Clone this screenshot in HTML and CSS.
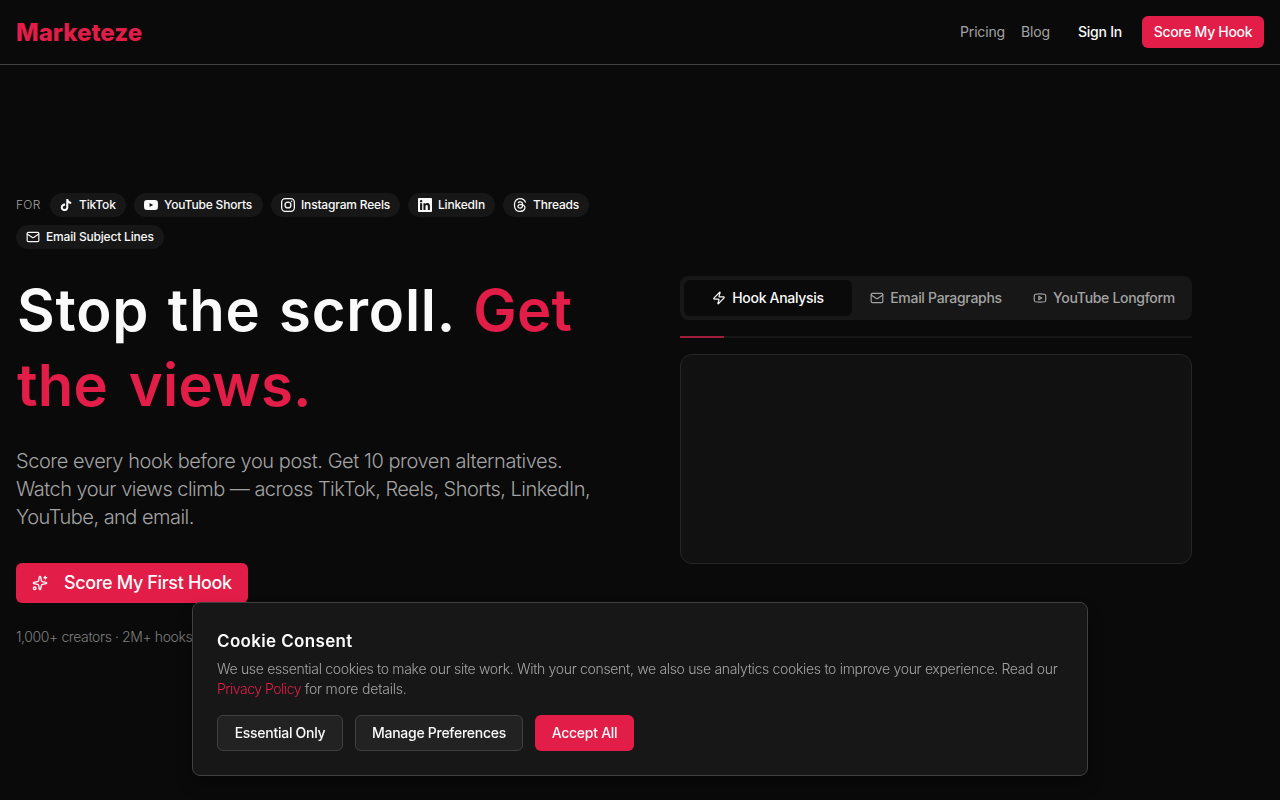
FILE: index.html
```
<!DOCTYPE html>
<html lang="en">
<head>
   <meta charset="UTF-8" />
   <meta name="viewport" content="width=device-width, initial-scale=1.0"/>
   <title>Marketeze</title>
   <link rel="stylesheet" href="styles.css">
</head>
<body>

   <header class="navbar">
      <a class="logo" href="#">Marketeze</a>
      <nav class="nav-links">
         <a class="nav-link pricing" href="#">Pricing</a>
         <a class="nav-link blog" href="#">Blog</a>
         <a class="sign-in" href="#">Sign In</a>
         <a class="btn btn-nav" href="#">Score My Hook</a>
      </nav>
   </header>

   <main class="hero">
      <section class="hero-text">
         <div class="platforms">
            <span class="for">FOR</span>
            <span class="badge tiktok">
               <svg class="icon" viewBox="-2 -2 28 28" fill="currentColor"><path d="M12.525.02c1.31-.02 2.61-.01 3.91-.02.08 1.53.63 3.09 1.75 4.17 1.12 1.11 2.7 1.62 4.24 1.79v4.03c-1.44-.05-2.89-.35-4.2-.97-.57-.26-1.1-.59-1.62-.93-.01 2.92.01 5.84-.02 8.75-.08 1.4-.54 2.79-1.35 3.94-1.31 1.92-3.58 3.17-5.91 3.21-1.43.08-2.86-.31-4.08-1.03-2.02-1.19-3.44-3.37-3.65-5.71-.02-.5-.03-1-.01-1.49.18-1.9 1.12-3.72 2.58-4.96 1.66-1.44 3.98-2.13 6.15-1.72.02 1.48-.04 2.96-.04 4.44-.99-.32-2.15-.23-3.02.37-.63.41-1.11 1.04-1.36 1.75-.21.51-.15 1.07-.14 1.61.24 1.64 1.82 3.02 3.5 2.87 1.12-.01 2.19-.66 2.77-1.61.19-.33.4-.67.41-1.06.1-1.79.06-3.57.07-5.36.01-4.03-.01-8.05.02-12.07z"/></svg>
               <span>TikTok</span>
            </span>
            <span class="badge shorts">
               <svg class="icon" viewBox="0 0 24 24" fill="currentColor"><path d="M23.498 6.186a3.016 3.016 0 0 0-2.122-2.136C19.505 3.545 12 3.545 12 3.545s-7.505 0-9.377.505A3.017 3.017 0 0 0 .502 6.186C0 8.07 0 12 0 12s0 3.93.502 5.814a3.016 3.016 0 0 0 2.122 2.136c1.871.505 9.376.505 9.376.505s7.505 0 9.377-.505a3.015 3.015 0 0 0 2.122-2.136C24 15.93 24 12 24 12s0-3.93-.502-5.814zM9.545 15.568V8.432L15.818 12l-6.273 3.568z"/></svg>
               <span>YouTube Shorts</span>
            </span>
            <span class="badge reels">
               <svg class="icon" viewBox="0 0 24 24" fill="none" stroke="currentColor" stroke-width="2.2"><rect x="1.1" y="1.1" width="21.8" height="21.8" rx="6"/><circle cx="12" cy="12" r="5.1"/><circle cx="18.4" cy="5.6" r="1.4" fill="currentColor" stroke="none"/></svg>
               <span>Instagram Reels</span>
            </span>
            <span class="badge linkedin">
               <svg class="icon" viewBox="0 0 24 24" fill="currentColor"><path d="M20.447 20.452h-3.554v-5.569c0-1.328-.027-3.037-1.852-3.037-1.853 0-2.136 1.445-2.136 2.939v5.667H9.351V9h3.414v1.561h.046c.477-.9 1.637-1.85 3.37-1.85 3.601 0 4.267 2.37 4.267 5.455v6.286zM5.337 7.433a2.062 2.062 0 0 1-2.063-2.065 2.064 2.064 0 1 1 2.063 2.065zm1.782 13.019H3.555V9h3.564v11.452zM22.225 0H1.771C.792 0 0 .774 0 1.729v20.542C0 23.227.792 24 1.771 24h20.451C23.2 24 24 23.227 24 22.271V1.729C24 .774 23.2 0 22.222 0h.003z"/></svg>
               <span>LinkedIn</span>
            </span>
            <span class="badge threads">
               <svg class="icon" viewBox="0 0 24 24" fill="currentColor"><path d="M12.186 24h-.007c-3.581-.024-6.334-1.205-8.184-3.509C2.35 18.44 1.5 15.586 1.472 12.01v-.017c.03-3.579.879-6.43 2.525-8.482C5.845 1.205 8.6.024 12.18 0h.014c2.746.02 5.043.725 6.826 2.098 1.677 1.29 2.858 3.13 3.509 5.467l-2.04.569c-1.104-3.96-3.898-5.984-8.304-6.015-2.91.022-5.11.936-6.54 2.717C4.307 6.504 3.616 8.914 3.589 12c.027 3.086.718 5.496 2.057 7.164 1.43 1.783 3.631 2.698 6.54 2.717 2.623-.02 4.358-.631 5.8-2.045 1.647-1.613 1.618-3.593 1.09-4.798-.31-.71-.873-1.3-1.634-1.75-.192 1.352-.622 2.446-1.284 3.272-.886 1.102-2.14 1.704-3.73 1.79-1.202.065-2.361-.218-3.259-.801-1.063-.689-1.685-1.74-1.752-2.964-.065-1.19.408-2.285 1.33-3.082.88-.76 2.119-1.207 3.583-1.291a13.853 13.853 0 0 1 3.02.142c-.126-.742-.375-1.332-.75-1.757-.513-.586-1.308-.883-2.359-.89h-.029c-.844 0-1.992.232-2.721 1.32L7.734 7.847c.98-1.454 2.568-2.256 4.478-2.256h.044c3.194.02 5.097 1.975 5.287 5.388.108.046.216.094.321.142 1.49.7 2.58 1.761 3.154 3.07.797 1.82.871 4.79-1.548 7.158-1.85 1.81-4.094 2.628-7.277 2.65Zm1.003-11.69c-.242 0-.487.007-.739.021-1.836.103-2.98.946-2.916 2.143.067 1.256 1.452 1.839 2.784 1.767 1.224-.065 2.818-.543 3.086-3.71a10.5 10.5 0 0 0-2.215-.221z"/></svg>
               <span>Threads</span>
            </span>
            <span class="badge subject">
               <svg class="icon" viewBox="0 0 24 24" fill="none" stroke="currentColor" stroke-width="2" stroke-linecap="round" stroke-linejoin="round"><rect x="2" y="4" width="20" height="16" rx="2"/><path d="m22 7-8.97 5.7a1.94 1.94 0 0 1-2.06 0L2 7"/></svg>
               <span>Email Subject Lines</span>
            </span>
         </div>

         <h1>Stop the scroll. <span class="accent">Get<br>the views.</span></h1>

         <p class="lead">
            <span class="lead-first">Score every hook before you post. Get 10 proven alternatives.</span><br>
            Watch your views climb — across TikTok, Reels, Shorts, LinkedIn,<br>
            YouTube, and email.
         </p>

         <a class="btn btn-hero" href="#">
            <svg class="icon-lg" viewBox="0 0 24 24" fill="none" stroke="currentColor" stroke-width="2" stroke-linecap="round" stroke-linejoin="round"><path d="M11.017 2.814a1 1 0 0 1 1.966 0l1.051 5.558a2 2 0 0 0 1.594 1.594l5.558 1.051a1 1 0 0 1 0 1.966l-5.558 1.051a2 2 0 0 0-1.594 1.594l-1.051 5.558a1 1 0 0 1-1.966 0l-1.051-5.558a2 2 0 0 0-1.594-1.594l-5.558-1.051a1 1 0 0 1 0-1.966l5.558-1.051a2 2 0 0 0 1.594-1.594z"/><path d="M20 2v4"/><path d="M22 4h-4"/><circle cx="4" cy="20" r="2"/></svg>
            <span>Score My First Hook</span>
         </a>
         <p class="stats">1,000+ creators · 2M+ hooks</p>
      </section>

      <section class="demo">
         <div class="tabs">
            <button class="tab active">
               <svg class="icon" viewBox="0 0 24 24" fill="none" stroke="currentColor" stroke-width="2" stroke-linecap="round" stroke-linejoin="round"><path d="M4 14a1 1 0 0 1-.78-1.63l9.9-10.2a.5.5 0 0 1 .86.46l-1.92 6.02A1 1 0 0 0 13 10h7a1 1 0 0 1 .78 1.63l-9.9 10.2a.5.5 0 0 1-.86-.46l1.92-6.02A1 1 0 0 0 11 14z"/></svg>
               <span>Hook Analysis</span>
            </button>
            <button class="tab">
               <svg class="icon" viewBox="0 0 24 24" fill="none" stroke="currentColor" stroke-width="2" stroke-linecap="round" stroke-linejoin="round"><rect x="2" y="4" width="20" height="16" rx="2"/><path d="m22 7-8.97 5.7a1.94 1.94 0 0 1-2.06 0L2 7"/></svg>
               <span>Email Paragraphs</span>
            </button>
            <button class="tab">
               <svg class="icon" viewBox="0 0 24 24" fill="none" stroke="currentColor" stroke-width="2" stroke-linecap="round" stroke-linejoin="round"><path d="M2.5 17a24.12 24.12 0 0 1 0-10 2 2 0 0 1 1.4-1.4 49.56 49.56 0 0 1 16.2 0A2 2 0 0 1 21.5 7a24.12 24.12 0 0 1 0 10 2 2 0 0 1-1.4 1.4 49.55 49.55 0 0 1-16.2 0A2 2 0 0 1 2.5 17"/><path d="m10 15 5-3-5-3z"/></svg>
               <span>YouTube Longform</span>
            </button>
         </div>
         <div class="progress"><div class="progress-bar"></div></div>
         <div class="preview"></div>
      </section>
   </main>

   <div class="cookie">
      <h3>Cookie Consent</h3>
      <p class="cookie-text">We use essential cookies to make our site work. With your consent, we also use analytics cookies to improve your experience. Read our<br>
         <a href="#">Privacy Policy</a> <span class="details">for more details.</span></p>
      <div class="cookie-buttons">
         <button class="btn btn-outline essential">Essential Only</button>
         <button class="btn btn-outline manage">Manage Preferences</button>
         <button class="btn accept">Accept All</button>
      </div>
   </div>

</body>
</html>
```
FILE: styles.css
```
* {
   margin: 0;
   padding: 0;
   box-sizing: border-box;
}
body {
   height: 800px;
   overflow: hidden;
   background: #0a0a0a;
   color: #fafafa;
   font-family: Inter, "Liberation Sans", sans-serif;
   font-size: 14px;
   line-height: 20px;
}
a {
   color: inherit;
   text-decoration: none;
}
button {
   font: inherit;
   color: inherit;
   border: none;
   background: none;
}
.navbar {
   display: flex;
   align-items: center;
   justify-content: space-between;
   height: 65px;
   padding: 0 16px;
   border-bottom: 1px solid #404040;
}
.logo {
   padding-top: 2px;
   color: #e11d48;
   font-size: 24px;
   font-weight: 800;
   line-height: 32px;
   letter-spacing: 0.02px;
}
.nav-links {
   display: flex;
   align-items: center;
   white-space: nowrap;
   letter-spacing: -0.15px;
}
.nav-link {
   color: #a3a3a3;
   margin-right: 16px;
}
.pricing {
   width: 45px;
}
.blog {
   width: 29px;
   margin-right: 28px;
}
.sign-in {
   width: 44px;
   margin-right: 20px;
   font-weight: 500;
   letter-spacing: -0.25px;
}
.btn {
   display: flex;
   align-items: center;
   justify-content: center;
   background: #e11d48;
   border-radius: 6px;
   font-weight: 500;
   letter-spacing: -0.3px;
   white-space: nowrap;
}
.btn-nav {
   width: 122px;
   height: 32px;
}
.hero {
   display: grid;
   grid-template-columns: 576px 512px;
   column-gap: 88px;
   padding: 128px 16px 0;
}
.platforms {
   display: flex;
   flex-wrap: wrap;
   align-items: center;
   gap: 8px;
   font-size: 12px;
   line-height: 16px;
}
.for {
   width: 26px;
   color: #a3a3a3;
   font-weight: 300;
   letter-spacing: 0.3px;
}
.badge {
   display: flex;
   align-items: center;
   gap: 6px;
   height: 24px;
   padding-left: 10px;
   border-radius: 12px;
   background: #171717;
   font-weight: 500;
   letter-spacing: -0.18px;
   white-space: nowrap;
}
.tiktok {
   width: 76px;
   padding-left: 9px;
}
.shorts {
   width: 129px;
}
.reels {
   width: 129px;
}
.linkedin {
   width: 87px;
}
.threads {
   width: 86px;
}
.subject {
   width: 148px;
}
.icon {
   width: 14px;
   height: 14px;
   flex: none;
}
h1 {
   margin-top: 24px;
   padding-left: 1px;
   font-size: 58px;
   font-weight: 600;
   line-height: 75px;
   letter-spacing: 0.8px;
   word-spacing: 3px;
   white-space: nowrap;
}
.accent {
   color: #e11d48;
   letter-spacing: 0.2px;
   word-spacing: 6px;
}
.lead {
   margin-top: 24px;
   color: #a3a3a3;
   font-size: 20px;
   font-weight: 300;
   line-height: 28px;
   letter-spacing: -0.52px;
   white-space: nowrap;
}
.lead-first {
   letter-spacing: -0.44px;
}
.btn-hero {
   width: 232px;
   height: 40px;
   margin-top: 32px;
   justify-content: flex-start;
   padding-left: 16px;
   gap: 16px;
   font-size: 18px;
   letter-spacing: -0.36px;
}
.icon-lg {
   width: 16px;
   height: 16px;
   flex: none;
}
.stats {
   width: 176px;
   margin-top: 24px;
   color: #7d7d7d;
   font-weight: 300;
   letter-spacing: -0.39px;
   white-space: nowrap;
}
.demo {
   padding-top: 83px;
}
.tabs {
   display: grid;
   grid-template-columns: repeat(3, 168px);
   height: 44px;
   padding: 4px;
   border-radius: 8px;
   background: #171717;
}
.tab {
   display: flex;
   align-items: center;
   justify-content: center;
   gap: 6px;
   border-radius: 6px;
   color: #a3a3a3;
   font-weight: 500;
   letter-spacing: -0.3px;
   white-space: nowrap;
}
.tab.active {
   background: #0a0a0a;
   color: #fafafa;
}
.progress {
   height: 2px;
   margin: 16px 0;
   background: #171717;
}
.progress-bar {
   width: 44px;
   height: 2px;
   background: #9f1c3b;
}
.preview {
   height: 210px;
   border: 1px solid #262626;
   border-radius: 12px;
   background: #111;
}
.cookie {
   position: fixed;
   left: 192px;
   bottom: 24px;
   width: 896px;
   height: 174px;
   padding: 24px;
   border: 1px solid #404040;
   border-radius: 8px;
   background: #171717;
   box-shadow: 0 10px 15px rgba(0, 0, 0, 0.3);
}
.cookie h3 {
   font-size: 17px;
   font-weight: 600;
   line-height: 28px;
   letter-spacing: 0.35px;
}
.cookie-text {
   margin-top: 4px;
   color: #a3a3a3;
   font-weight: 300;
   letter-spacing: -0.32px;
   white-space: nowrap;
}
.cookie-text a {
   color: #e11d48;
   letter-spacing: -0.48px;
}
.details {
   letter-spacing: -0.2px;
}
.cookie-buttons {
   display: flex;
   gap: 12px;
   margin-top: 16px;
}
.cookie-buttons .btn {
   height: 36px;
   letter-spacing: -0.27px;
}
.btn-outline {
   border: 1px solid #404040;
   background: #222;
}
.essential {
   width: 126px;
}
.manage {
   width: 168px;
}
.accept {
   width: 99px;
}
```
